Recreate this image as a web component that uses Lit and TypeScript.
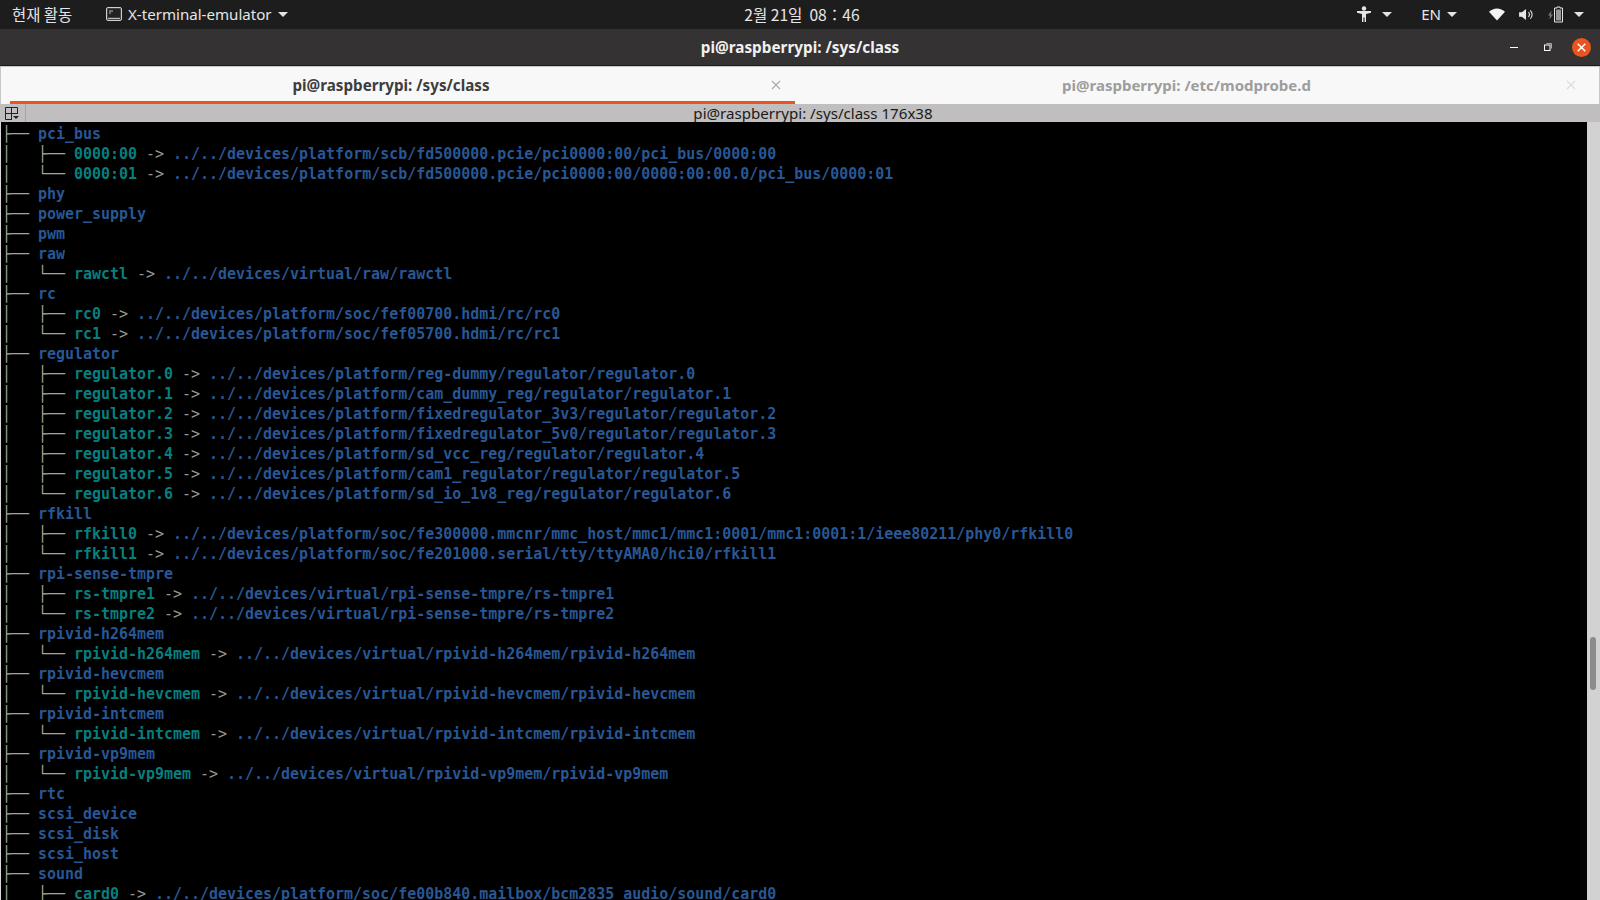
import { LitElement, html, css } from "lit";
import { customElement } from "lit/decorators.js";

type L = [string, string?, string?];
const R: L[] = [];
const dir = (n: string) => R.push(["├── ", n]);
const link = (p: string, n: string, t: string) => R.push([`│   ${p}── `, n, t]);
dir("pci_bus");
link("├", "0000:00", "../../devices/platform/scb/fd500000.pcie/pci0000:00/pci_bus/0000:00");
link("└", "0000:01", "../../devices/platform/scb/fd500000.pcie/pci0000:00/0000:00:00.0/pci_bus/0000:01");
dir("phy");
dir("power_supply");
dir("pwm");
dir("raw");
link("└", "rawctl", "../../devices/virtual/raw/rawctl");
dir("rc");
link("├", "rc0", "../../devices/platform/soc/fef00700.hdmi/rc/rc0");
link("└", "rc1", "../../devices/platform/soc/fef05700.hdmi/rc/rc1");
dir("regulator");
link("├", "regulator.0", "../../devices/platform/reg-dummy/regulator/regulator.0");
link("├", "regulator.1", "../../devices/platform/cam_dummy_reg/regulator/regulator.1");
link("├", "regulator.2", "../../devices/platform/fixedregulator_3v3/regulator/regulator.2");
link("├", "regulator.3", "../../devices/platform/fixedregulator_5v0/regulator/regulator.3");
link("├", "regulator.4", "../../devices/platform/sd_vcc_reg/regulator/regulator.4");
link("├", "regulator.5", "../../devices/platform/cam1_regulator/regulator/regulator.5");
link("└", "regulator.6", "../../devices/platform/sd_io_1v8_reg/regulator/regulator.6");
dir("rfkill");
link("├", "rfkill0", "../../devices/platform/soc/fe300000.mmcnr/mmc_host/mmc1/mmc1:0001/mmc1:0001:1/ieee80211/phy0/rfkill0");
link("└", "rfkill1", "../../devices/platform/soc/fe201000.serial/tty/ttyAMA0/hci0/rfkill1");
dir("rpi-sense-tmpre");
link("├", "rs-tmpre1", "../../devices/virtual/rpi-sense-tmpre/rs-tmpre1");
link("└", "rs-tmpre2", "../../devices/virtual/rpi-sense-tmpre/rs-tmpre2");
dir("rpivid-h264mem");
link("└", "rpivid-h264mem", "../../devices/virtual/rpivid-h264mem/rpivid-h264mem");
dir("rpivid-hevcmem");
link("└", "rpivid-hevcmem", "../../devices/virtual/rpivid-hevcmem/rpivid-hevcmem");
dir("rpivid-intcmem");
link("└", "rpivid-intcmem", "../../devices/virtual/rpivid-intcmem/rpivid-intcmem");
dir("rpivid-vp9mem");
link("└", "rpivid-vp9mem", "../../devices/virtual/rpivid-vp9mem/rpivid-vp9mem");
dir("rtc");
dir("scsi_device");
dir("scsi_disk");
dir("scsi_host");
dir("sound");
link("├", "card0", "../../devices/platform/soc/fe00b840.mailbox/bcm2835_audio/sound/card0");

const caret = html`<svg class="caret" width="10" height="5" viewBox="0 0 10 5"><path d="M0 0h10L5 5z" fill="#e4e4e4"/></svg>`;
const closeX = html`<svg width="10" height="10" viewBox="0 0 10 10"><path d="M1 1l8 8M9 1l-8 8" stroke="currentColor" stroke-width="1.1" fill="none"/></svg>`;

@customElement("app-root")
export class AppRoot extends LitElement {
  static styles = css`
    :host { display: flex; flex-direction: column; width: 1600px; height: 900px; overflow: hidden; background: #000; font-family: "Open Sans", "Noto Sans", sans-serif; }
    .top { height: 29px; flex: none; background: #1d1d1d; color: #e6e6e6; display: grid; grid-template-columns: 1fr auto 1fr; align-items: center; padding-bottom: 1px; box-sizing: border-box; }
    .top-l { display: flex; align-items: center; padding-left: 12px; }
    .act { font-family: "Noto Sans CJK KR", sans-serif; font-size: 15.4px; width: 94px; }
    .app { display: flex; align-items: center; gap: 6px; }
    .app-name { font-family: "Noto Sans", sans-serif; font-size: 15.1px; }
    .clock { font-family: "Noto Sans CJK KR", sans-serif; font-size: 15.6px; white-space: pre; position: relative; left: 2px; }
    .top-r { display: flex; align-items: center; justify-content: flex-end; padding-right: 16px; }
    .en { font-family: "Noto Sans", sans-serif; font-size: 15.1px; margin: 0 6px 0 29px; }
    .access { display: flex; align-items: center; gap: 11px; }
    .wifi { margin-left: 32px; }
    .vol { margin-left: 14px; }
    .bat { margin-left: 14px; margin-right: 11px; }
    .title { height: 37px; flex: none; background: #343232; color: #f0f0f0; display: grid; grid-template-columns: 1fr auto 1fr; align-items: center; border-bottom: 1px solid #1e1c1c; box-sizing: border-box; }
    .title-t { font-family: "Noto Sans", sans-serif; font-weight: 700; font-size: 15.3px; }
    .wbtns { display: flex; align-items: center; justify-content: flex-end; padding-right: 9px; }
    .wmin { width: 8px; height: 1px; background: #fff; margin-right: 26px; }
    .wmax { margin-right: 20px; }
    .wclose { width: 19px; height: 19px; border-radius: 50%; background: #e95420; color: #fff; display: flex; align-items: center; justify-content: center; }
    .tabs { height: 38px; flex: none; display: flex; background: #f8f8f8; border: solid #c8c6c6; border-width: 1px 1px 0; box-sizing: border-box; }
    .tab { display: flex; align-items: center; position: relative; font-family: "Noto Sans", sans-serif; font-weight: 700; font-size: 15.2px; padding-bottom: 1px; box-sizing: border-box; }
    .tab-t { flex: 1; text-align: center; }
    .tab-x { width: 10px; height: 10px; display: flex; color: #a9a9a9; }
    .tab.on { width: 794px; flex: none; color: #3d3d3d; padding-left: 10px; }
    .tab.on .tab-x { margin-right: 14px; }
    .tab.on::after { content: ""; position: absolute; left: 9px; right: 0; bottom: 0; height: 3px; background: #e95420; }
    .tab.off { flex: 1; color: #9d9d9d; padding-left: 12px; font-size: 15px; }
    .tab.off .tab-x { color: #dcdcdc; margin-right: 23px; }
    .status { height: 18px; flex: none; background: #c0bebe; display: flex; align-items: center; color: #1a1a1a; font-family: "Noto Sans", sans-serif; font-size: 15.1px; }
    .status-ic { width: 26px; height: 18px; flex: none; display: flex; align-items: center; padding-left: 5px; box-sizing: border-box; border-right: 1px solid #a8a6a6; }
    .status-t { flex: 1; text-align: center; }
    .body { flex: 1; min-height: 0; display: flex; background: #000; border-left: 1px solid #d8d8d8; }
    .term { flex: 1; min-width: 0; overflow: hidden; padding: 2px 0 0 1px; font-family: "DejaVu Sans Mono", "Liberation Mono", monospace; font-size: 14.96px; line-height: 20px; white-space: pre; }
    .ln { height: 20px; }
    .tr { color: #a8a49c; font-weight: 400; }
    .d { color: #285794; font-weight: 700; }
    .n { color: #077f7f; font-weight: 700; }
    .ar { color: #9a968e; font-weight: 400; }
    .t { color: #285794; font-weight: 700; }
    .sb { width: 13px; flex: none; background: #d2d2d2; position: relative; }
    .thumb { position: absolute; left: 3px; top: 515px; width: 6px; height: 53px; border-radius: 3px; background: #8c8c8c; }
  `;

  render() {
    return html`
      <div class="top">
        <div class="top-l">
          <span class="act">현재 활동</span>
          <span class="app">
            <svg width="16" height="14" viewBox="0 0 16 14"><rect x=".5" y=".5" width="15" height="13" rx="1.500" fill="#444" stroke="#cfcfcf"/><rect x="2" y="2" width="12" height="8" fill="#222"/><path d="M3 4h4M3 6h2" stroke="#bbb"/><rect x="2" y="11" width="12" height="1" fill="#bbb"/></svg>
            <span class="app-name">X-terminal-emulator</span>
            ${caret}
          </span>
        </div>
        <div class="clock">2월 21일  08：46</div>
        <div class="top-r">
          <span class="access">
            <svg width="14" height="16" viewBox="0 0 14 16"><circle cx="7" cy="2.500" r="2.200" fill="#e6e6e6"/><path d="M0 5h14v1.800L9 8v8H7.600v-4.400H6.400V16H5V8L0 6.800z" fill="#e6e6e6"/></svg>
            ${caret}
          </span>
          <span class="en">EN</span>
          ${caret}
          <svg class="wifi" width="16" height="13" viewBox="0 0 17 13"><path d="M0 3.600C2.300 1.300 5.200 0 8.500 0S14.700 1.300 17 3.600L8.500 13z" fill="#f2f2f2"/></svg>
          <svg class="vol" width="15" height="13" viewBox="0 0 16 14"><path d="M0 4.500h3L7.500 1v12L3 9.500H0z" fill="#e6e6e6"/><path d="M10 4.500a3.200 3.200 0 010 5M12 2.500a6 6 0 010 9" stroke="#e6e6e6" stroke-width="1.200" fill="none"/></svg>
          <svg class="bat" width="15" height="17" viewBox="0 0 15 16"><path d="M3.500 4L0 9h2l-.5 4L5 8H3z" fill="#777"/><path d="M9 .5h3v1h2.500v14h-8v-14H9z" fill="none" stroke="#e6e6e6"/><rect x="8" y="3" width="5" height="11" fill="#9a9a9a"/></svg>
          ${caret}
        </div>
      </div>
      <div class="title">
        <span></span>
        <span class="title-t">pi@raspberrypi: /sys/class</span>
        <div class="wbtns">
          <span class="wmin"></span>
          <svg class="wmax" width="8" height="8" viewBox="0 0 8 8"><path d="M2.500.5h5v5" fill="none" stroke="#aaa"/><rect x=".5" y="2" width="5.500" height="5.500" fill="#343232" stroke="#fff"/></svg>
          <span class="wclose"><svg width="9" height="9" viewBox="0 0 9 9"><path d="M.7.7l7.600 7.600M8.300.7L.7 8.300" stroke="#fff" stroke-width="1.500"/></svg></span>
        </div>
      </div>
      <div class="tabs">
        <div class="tab on"><span class="tab-t">pi@raspberrypi: /sys/class</span><span class="tab-x">${closeX}</span></div>
        <div class="tab off"><span class="tab-t">pi@raspberrypi: /etc/modprobe.d</span><span class="tab-x">${closeX}</span></div>
      </div>
      <div class="status">
        <span class="status-ic">
          <svg width="14" height="13" viewBox="0 0 14 13"><path d="M7 12.500H.5V.5h12V7M.5 6.500h12M6.500.5v12" fill="none" stroke="#222"/><path d="M8 9h6l-3 3z" fill="#222"/></svg>
        </span>
        <span class="status-t">pi@raspberrypi: /sys/class 176x38</span>
      </div>
      <div class="body">
        <div class="term">${R.map(([a, b, c]) => html`<div class="ln"><span class="tr">${a}</span>${c ? html`<span class="n">${b}</span><span class="ar"> -> </span><span class="t">${c}</span>` : html`<span class="d">${b}</span>`}</div>`)}</div>
        <div class="sb"><div class="thumb"></div></div>
      </div>
    `;
  }
}
